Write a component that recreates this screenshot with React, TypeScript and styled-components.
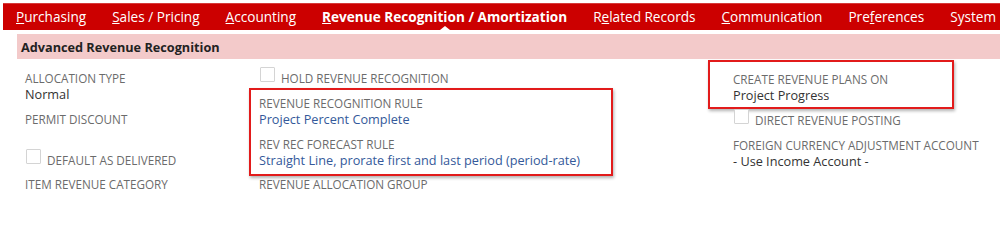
import React from "react";
import styled, { createGlobalStyle } from "styled-components";

const GlobalStyle = createGlobalStyle`
  html, body {
    margin: 0;
    padding: 0;
    background: #fff;
    font-family: "Open Sans", "Liberation Sans", Arial, sans-serif;
  }
`;

const Page = styled.div`
  width: 1000px;
  height: 200px;
  overflow: hidden;
  padding: 3px 0 0 3px;
  box-sizing: border-box;
`;

const TabBar = styled.div`
  height: 27px;
  background: #cc0000;
  border-top: 1px solid #d63a3a;
  box-sizing: border-box;
  display: flex;
  align-items: center;
  gap: 26px;
  padding-left: 13px;
  white-space: nowrap;
  overflow: hidden;
`;

const Tab = styled.div<{ $active?: boolean }>`
  position: relative;
  height: 100%;
  display: flex;
  align-items: center;
  padding-bottom: 1px;
  box-sizing: border-box;
  color: #fff;
  font-size: 13.6px;
  font-weight: ${(p) => (p.$active ? 700 : 400)};
  flex-shrink: 0;

  ${(p) =>
    p.$active &&
    `
    &::after {
      content: "";
      position: absolute;
      left: 50%;
      bottom: 0;
      margin-left: -5px;
      border-left: 5px solid transparent;
      border-right: 5px solid transparent;
      border-bottom: 4px solid #fff;
    }
  `}
`;

const SectionHeader = styled.div`
  margin: 4px 0 0 14px;
  height: 25px;
  background: #f3caca;
  display: flex;
  align-items: center;
  padding-left: 4px;
  font-size: 12.7px;
  font-weight: 700;
  color: #222;
`;

const Fields = styled.div`
  display: grid;
  grid-template-columns: 234px 474px 1fr;
  padding-left: 22px;
`;

const Column = styled.div<{ $top?: number }>`
  display: flex;
  flex-direction: column;
  padding-top: ${(p) => p.$top ?? 0}px;
`;

const Field = styled.div<{ $gap?: number }>`
  display: flex;
  flex-direction: column;
  margin-bottom: ${(p) => p.$gap ?? 8}px;
`;

const Label = styled.div`
  height: 16px;
  line-height: 16px;
  font-size: 11.7px;
  color: #6b6b6b;
  text-transform: uppercase;
  white-space: nowrap;
`;

const Value = styled.div<{ $link?: boolean }>`
  height: 17px;
  line-height: 17px;
  font-size: 12.7px;
  color: ${(p) => (p.$link ? "#34599a" : "#333")};
  white-space: nowrap;
`;

const CheckRow = styled.div<{ $gap?: number; $lift?: number }>`
  display: flex;
  align-items: flex-end;
  gap: 6px;
  height: 16px;
  margin-top: ${(p) => p.$lift ?? 0}px;
  margin-bottom: ${(p) => p.$gap ?? 8}px;
`;

const Box = styled.span`
  width: 15px;
  height: 15px;
  border: 1px solid #d4d4d4;
  border-radius: 1px;
  background: #fff;
  box-sizing: border-box;
  margin-bottom: 4px;
  margin-left: 1px;
`;

const Highlight = styled.div<{ $left: number; $pad: number; $width: number }>`
  border: 2px solid #e21b1b;
  box-shadow: 1px 2px 3px rgba(0, 0, 0, 0.3);
  margin-left: -${(p) => p.$left + 2}px;
  padding: ${(p) => p.$pad}px 0 ${(p) => p.$pad}px ${(p) => p.$left}px;
  width: ${(p) => p.$width}px;
  box-sizing: border-box;
`;

const tabs: { label: React.ReactNode; active?: boolean }[] = [
  { label: <><u>P</u>urchasing</> },
  { label: <><u>S</u>ales / Pricing</> },
  { label: <><u>A</u>ccounting</> },
  { label: <><u>R</u>evenue Recognition / Amortization</>, active: true },
  { label: <>R<u>e</u>lated Records</> },
  { label: <><u>C</u>ommunication</> },
  { label: <>Pre<u>f</u>erences</> },
  { label: <>System</> },
];

export default function App() {
  return (
    <Page>
      <GlobalStyle />
      <TabBar>
        {tabs.map((t, i) => (
          <Tab key={i} $active={t.active}>
            {t.label}
          </Tab>
        ))}
      </TabBar>
      <SectionHeader>Advanced Revenue Recognition</SectionHeader>
      <Fields>
        <Column $top={11}>
          <Field>
            <Label>Allocation Type</Label>
            <Value>Normal</Value>
          </Field>
          <Field>
            <Label>Permit Discount</Label>
            <Value />
          </Field>
          <CheckRow>
            <Box />
            <Label>Default as Delivered</Label>
          </CheckRow>
          <Field>
            <Label>Item Revenue Category</Label>
          </Field>
        </Column>
        <Column $top={11}>
          <CheckRow $gap={2}>
            <Box />
            <Label>Hold Revenue Recognition</Label>
          </CheckRow>
          <Highlight $left={8} $pad={5} $width={364}>
            <Field>
              <Label>Revenue Recognition Rule</Label>
              <Value $link>Project Percent Complete</Value>
            </Field>
            <Field $gap={0}>
              <Label>Rev Rec Forecast Rule</Label>
              <Value $link>Straight Line, prorate first and last period (period-rate)</Value>
            </Field>
          </Highlight>
          <Field>
            <Label>Revenue Allocation Group</Label>
          </Field>
        </Column>
        <Column $top={1}>
          <Highlight $left={23} $pad={9} $width={246}>
            <Field $gap={-6}>
              <Label>Create Revenue Plans On</Label>
              <Value>Project Progress</Value>
            </Field>
          </Highlight>
          <CheckRow $gap={9} $lift={3}>
            <Box />
            <Label>Direct Revenue Posting</Label>
          </CheckRow>
          <Field>
            <Label>Foreign Currency Adjustment Account</Label>
            <Value>- Use Income Account -</Value>
          </Field>
        </Column>
      </Fields>
    </Page>
  );
}
